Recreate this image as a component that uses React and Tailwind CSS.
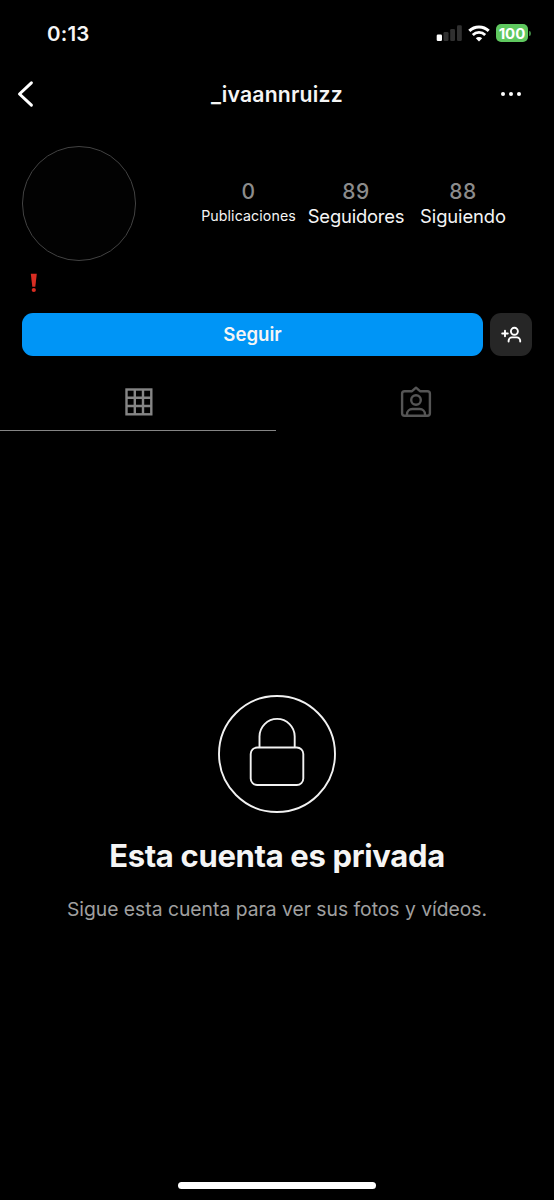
import React, { useState } from 'react';

const stats = [
  { value: '0', label: 'Publicaciones', box: 'w-[95px]', text: 'text-[14.2px] tracking-[0.1px]' },
  { value: '89', label: 'Seguidores', box: 'w-[96px] ml-[12px]', text: 'text-[18.4px] tracking-[-0.2px]' },
  { value: '88', label: 'Siguiendo', box: 'w-[86px] ml-[16px]', text: 'text-[18.4px] tracking-[-0.1px]' },
];

const SignalIcon = () => (
  <svg width="26" height="16" viewBox="0 0 26 16">
    <rect x="0.7" y="9.5" width="5.3" height="6.5" rx="1.3" fill="#fff" />
    <rect x="7.5" y="7" width="5" height="9" rx="1.3" fill="#303030" />
    <rect x="14.2" y="4" width="4.8" height="12" rx="1.3" fill="#303030" />
    <rect x="21" y="0.3" width="4.8" height="15.7" rx="1.3" fill="#303030" />
  </svg>
);

const WifiIcon = () => (
  <svg width="22" height="17" viewBox="0 0 22 17">
    <path d="M1.3 5.9a13.8 13.8 0 0 1 19.4 0" fill="none" stroke="#fff" strokeWidth="3" />
    <path d="M4.8 9.9a8.8 8.8 0 0 1 12.4 0" fill="none" stroke="#fff" strokeWidth="2.8" />
    <path d="M7.8 13.3a4.6 4.6 0 0 1 6.4 0L11 16.5z" fill="#fff" />
  </svg>
);

const AddPersonIcon = () => (
  <svg width="22" height="18" viewBox="0 0 22 18" fill="none" stroke="#fff" strokeWidth="1.9" strokeLinecap="round">
    <path d="M2.2 7.5h5.6M5 4.7v5.6" />
    <circle cx="14.4" cy="5.3" r="3.5" />
    <path d="M8.6 15.5v-.7a3.4 3.4 0 0 1 3.4-3.4h4.8a3.4 3.4 0 0 1 3.4 3.4v.7" />
  </svg>
);

const GridIcon = () => (
  <svg width="28" height="28" viewBox="0 0 28 28" fill="none" stroke="#858585" strokeWidth="2.4">
    <rect x="1.5" y="1.5" width="24.8" height="24.8" />
    <path d="M9.8 1v26M18 1v26M1 9.8h26M1 18h26" />
  </svg>
);

const TaggedIcon = () => (
  <svg width="32" height="32" viewBox="0 0 32 32" fill="none" stroke="#555" strokeWidth="2.4" strokeLinejoin="round">
    <path d="M12 5.2 16 1.7l4 3.5h7.4a2.5 2.5 0 0 1 2.5 2.5v19.6a2.5 2.5 0 0 1-2.5 2.5H4.6a2.5 2.5 0 0 1-2.5-2.5V7.7a2.5 2.5 0 0 1 2.5-2.5z" />
    <circle cx="16" cy="14" r="4.8" />
    <path d="M7 29.5v-1.2a5.3 5.3 0 0 1 5.3-5.3h7.4a5.3 5.3 0 0 1 5.3 5.3v1.2" />
  </svg>
);

const LockIcon = () => (
  <svg width="118" height="118" viewBox="0 0 118 118" fill="none" stroke="#f2f2f2" strokeWidth="1.9">
    <circle cx="59" cy="59" r="58" />
    <rect x="32.7" y="52.5" width="52.6" height="37.5" rx="6.5" />
    <path d="M41.5 52V41.5a17.6 17.6 0 0 1 35.2 0V52" />
  </svg>
);

const App = () => {
  const [tab, setTab] = useState('grid');

  return (
    <div className="flex flex-col w-[554px] h-[1200px] overflow-hidden bg-black text-[#f5f5f5] font-['Inter','Liberation_Sans',sans-serif]">
      {/* status bar */}
      <div className="flex items-center h-[66px] pl-[47px] pr-[23px] shrink-0">
        <span className="pt-[2px] text-[20.5px] leading-6 font-semibold tracking-[0.2px]">0:13</span>
        <div className="flex items-center ml-auto">
          <SignalIcon />
          <span className="ml-[6px]"><WifiIcon /></span>
          <div className="flex items-center justify-center w-[32px] h-[18px] ml-[6px] rounded-[5px] bg-[#5fc85f] text-white text-[15px] leading-none font-bold">100</div>
          <span className="w-[2px] h-[5px] ml-px rounded-r-full bg-[#3d8040]" />
        </div>
      </div>

      <header className="flex items-center h-[56px] pl-[17px] pr-[33px] shrink-0">
        <button className="w-[58px]">
          <svg width="18" height="28" viewBox="0 0 18 28" fill="none" stroke="#fff" strokeWidth="3" strokeLinecap="round" strokeLinejoin="round">
            <path d="M14.4 2.8 2.5 14l11.9 11.2" />
          </svg>
        </button>
        <h1 className="flex-1 text-center text-[21.2px] leading-7 font-semibold tracking-[0.2px]">_ivaannruizz</h1>
        <button className="flex justify-end gap-1 w-[42px]">
          <i className="w-1 h-1 rounded-full bg-white" />
          <i className="w-1 h-1 rounded-full bg-white" />
          <i className="w-1 h-1 rounded-full bg-white" />
        </button>
      </header>

      <section className="flex h-[139px] pt-6 pl-[22px] shrink-0">
        <div className="w-[114px] h-[115px] rounded-full border border-[#424242] bg-[#020202] shrink-0" />
        <div className="flex ml-[65px] mt-[32px]">
          {stats.map((s) => (
            <div key={s.label} className={`flex flex-col items-center ${s.box}`}>
              <span className="text-[21px] leading-[27px] font-medium tracking-[0.5px] text-[#8c8c8c]">{s.value}</span>
              <span className={`leading-[22px] whitespace-nowrap ${s.text}`}>{s.label}</span>
            </div>
          ))}
        </div>
      </section>

      <div className="h-[52px] pt-[11px] pl-[30px] shrink-0">
        <svg width="8" height="22" viewBox="0 0 8 22" fill="#d92d22">
          <path d="M.8 1.8h6L5.3 14.7H2.3z" />
          <circle cx="3.8" cy="18" r="2.1" />
        </svg>
      </div>

      <div className="flex gap-[7px] pl-[22px] pr-[22px] h-[43px] shrink-0">
        <button className="flex-1 pt-px rounded-[11px] bg-[#0095f6] text-[18.6px] font-semibold">Seguir</button>
        <button className="flex items-center justify-center w-[42px] rounded-[11px] bg-[#262626]">
          <AddPersonIcon />
        </button>
      </div>

      <nav className="flex h-[75px] shrink-0">
        <button onClick={() => setTab('grid')} className={`flex justify-center w-[276px] pt-8 pl-px border-b ${tab === 'grid' ? 'border-[#858585]' : 'border-black'}`}>
          <GridIcon />
        </button>
        <button onClick={() => setTab('tagged')} className={`flex justify-center w-[278px] pt-[30px] pl-px border-b ${tab === 'tagged' ? 'border-[#858585]' : 'border-black'}`}>
          <TaggedIcon />
        </button>
      </nav>

      <main className="flex flex-col items-center flex-1 pt-[264px]">
        <LockIcon />
        <h2 className="mt-[23px] text-[31px] leading-10 font-bold whitespace-nowrap tracking-[-0.33px]">Esta cuenta es privada</h2>
        <p className="mt-[19px] text-[19.3px] leading-7 text-[#a0a0a0] whitespace-nowrap">Sigue esta cuenta para ver sus fotos y vídeos.</p>
      </main>

      <div className="w-[198px] h-[7px] mx-auto mb-[11px] rounded-full bg-white shrink-0" />
    </div>
  );
};

export default App;
